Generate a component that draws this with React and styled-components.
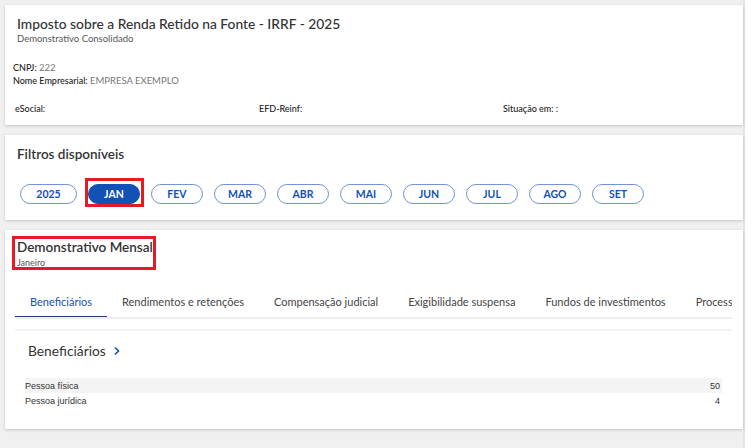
import React from "react";
import styled, { createGlobalStyle } from "styled-components";

const GlobalStyle = createGlobalStyle`
  html, body {
    margin: 0;
    padding: 0;
    background: #ffffff;
    font-family: "Lato", "Open Sans", sans-serif;
    color: #333333;
  }
  * { box-sizing: border-box; }
`;

const months = ["JAN", "FEV", "MAR", "ABR", "MAI", "JUN", "JUL", "AGO", "SET"];
const tabs = [
  "Beneficiários",
  "Rendimentos e retenções",
  "Compensação judicial",
  "Exigibilidade suspensa",
  "Fundos de investimentos",
  "Processos",
];
const rows = [
  { label: "Pessoa física", value: 50 },
  { label: "Pessoa jurídica", value: 4 },
];

const App = () => {
  return (
    <Page>
      <GlobalStyle />
      <Card>
        <Title>Imposto sobre a Renda Retido na Fonte - IRRF - 2025</Title>
        <Subtitle>Demonstrativo Consolidado</Subtitle>
        <InfoBlock>
          <InfoLine>
            <InfoLabel>CNPJ:</InfoLabel> <InfoValue>222</InfoValue>
          </InfoLine>
          <InfoLine>
            <InfoLabel>Nome Empresarial:</InfoLabel> <InfoValue>EMPRESA EXEMPLO</InfoValue>
          </InfoLine>
        </InfoBlock>
        <StatusRow>
          <InfoLabel>eSocial:</InfoLabel>
          <InfoLabel>EFD-Reinf:</InfoLabel>
          <InfoLabel>Situação em: :</InfoLabel>
        </StatusRow>
      </Card>

      <Card>
        <SectionTitle>Filtros disponíveis</SectionTitle>
        <ChipRow>
          <Chip $wide>2025</Chip>
          {months.map((m) => (
            <Marked key={m}>
              <Chip $active={m === "JAN"}>{m}</Chip>
              {m === "JAN" && <Highlight $inset="-6px -4px -3px -3px" />}
            </Marked>
          ))}
        </ChipRow>
      </Card>

      <Card $pad="8px 11px 0 10px">
        <Marked $offset="2px">
          <SectionTitle $tight>Demonstrativo Mensal</SectionTitle>
          <MonthName>Janeiro</MonthName>
          <Highlight $inset="-2px -3px -1px -5px" />
        </Marked>
        <TabBar>
          {tabs.map((t, i) => (
            <Tab key={t} $active={i === 0}>
              {t}
            </Tab>
          ))}
        </TabBar>
        <Divider />
        <Panel>
          <PanelTitle>
            Beneficiários
            <Chevron viewBox="0 0 10 10">
              <path d="M3 1.5 L6.5 5 L3 8.5" />
            </Chevron>
          </PanelTitle>
          <Table>
            {rows.map((r, i) => (
              <Row key={r.label} $striped={i === 0}>
                <span>{r.label}</span>
                <span>{r.value}</span>
              </Row>
            ))}
          </Table>
        </Panel>
      </Card>
    </Page>
  );
};

const Page = styled.div`
  width: 745px;
  height: 448px;
  background: #f0f0f0;
  padding: 5px 0 0 5px;
  display: flex;
  flex-direction: column;
  gap: 10px;
  border-right: 2px solid #e4e4e4;
`;

const Card = styled.div`
  background: #ffffff;
  box-shadow: 0 1px 3px rgba(0, 0, 0, 0.18);
  padding: ${(p) => p.$pad || "10px 11px 10px 12px"};
  flex-shrink: 0;
`;

const Title = styled.h1`
  margin: 0;
  font-size: 13.8px;
  font-weight: 500;
  line-height: 17px;
  color: #333333;
`;

const Subtitle = styled.div`
  font-size: 9.5px;
  line-height: 13px;
  color: #555555;
`;

const InfoBlock = styled.div`
  margin: 16px 0 0 -4px;
`;

const InfoLine = styled.div`
  font-size: 9px;
  line-height: 13px;
`;

const InfoLabel = styled.span`
  color: #222222;
  font-weight: 500;
  font-size: 9px;
`;

const InfoValue = styled.span`
  color: #777777;
  font-size: 9.5px;
`;

const StatusRow = styled.div`
  margin: 15px 0 0 -2px;
  display: grid;
  grid-template-columns: 244px 244px 1fr;
  line-height: 13px;
`;

const SectionTitle = styled.h2`
  margin: ${(p) => (p.$tight ? "0" : "0 0 21px")};
  font-size: 13.5px;
  font-weight: 600;
  line-height: 18px;
  color: #333333;
`;

const ChipRow = styled.div`
  display: flex;
  gap: 11px;
  padding-left: 3px;
  margin-bottom: 6px;
`;

const Marked = styled.div`
  position: relative;
  width: fit-content;
  margin-left: ${(p) => p.$offset || "0"};
`;

const Chip = styled.button`
  display: block;
  width: ${(p) => (p.$wide ? "57px" : "52px")};
  height: 20px;
  border-radius: 10px;
  border: 1px solid ${(p) => (p.$active ? "#1351b4" : "#7393d6")};
  background: ${(p) => (p.$active ? "#1351b4" : "#ffffff")};
  color: ${(p) => (p.$active ? "#ffffff" : "#1351b4")};
  font-family: "Lato", sans-serif;
  font-weight: 700;
  font-size: 10.5px;
  padding: 0;
  cursor: pointer;
`;

const Highlight = styled.div`
  position: absolute;
  inset: ${(p) => p.$inset};
  border: 3px solid #e31b23;
  pointer-events: none;
`;

const MonthName = styled.div`
  font-size: 9px;
  line-height: 13px;
  color: #555555;
`;

const TabBar = styled.div`
  margin-top: 25px;
  display: flex;
  overflow: hidden;
  white-space: nowrap;
  border-bottom: 2px solid #eeeeee;
`;

const Tab = styled.div`
  padding: 0 15px;
  height: 25px;
  line-height: 16px;
  font-size: 11px;
  flex-shrink: 0;
  color: ${(p) => (p.$active ? "#1351b4" : "#444444")};
  border-bottom: 3px solid ${(p) => (p.$active ? "#1e3f7a" : "transparent")};
  margin-bottom: -2px;
`;

const Divider = styled.div`
  margin-top: 10px;
  height: 2px;
  background: #f2f2f2;
`;

const Panel = styled.div`
  padding: 0 10px 21px 10px;
`;

const PanelTitle = styled.div`
  margin: 11px 0 0 3px;
  display: flex;
  align-items: center;
  gap: 6px;
  font-size: 13.8px;
  line-height: 18px;
  color: #333333;
`;

const Chevron = styled.svg`
  width: 10px;
  height: 10px;
  fill: none;
  stroke: #1351b4;
  stroke-width: 1.6;
`;

const Table = styled.div`
  margin-top: 18px;
`;

const Row = styled.div`
  display: flex;
  justify-content: space-between;
  height: 15px;
  align-items: center;
  padding-right: 2px;
  font-family: "Liberation Sans", Arial, sans-serif;
  font-size: 9px;
  color: #333333;
  background: ${(p) => (p.$striped ? "#f4f4f4" : "transparent")};
`;

export default App;
